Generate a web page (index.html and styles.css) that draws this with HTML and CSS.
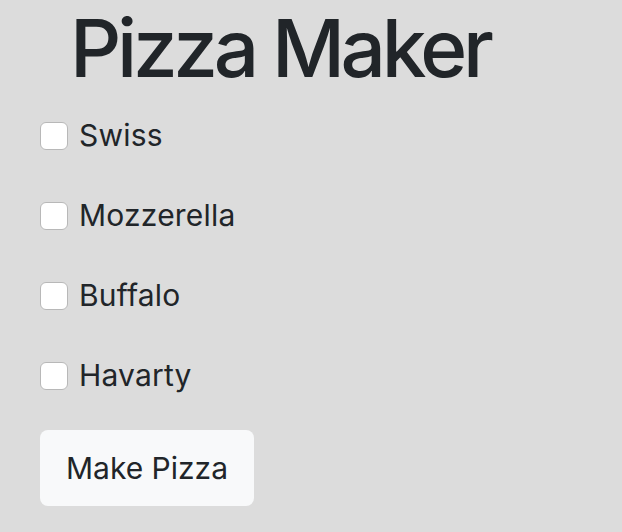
FILE: index.html
```html
<!DOCTYPE html>
<html>
<head>
<meta charset="utf-8">
<link rel="stylesheet" href="styles.css">
</head>
<body>
<div class="page">
  <h1 class="title">Pizza Maker</h1>
  <div class="options">
    <label class="option"><input type="checkbox" class="box"><span>Swiss</span></label>
    <label class="option"><input type="checkbox" class="box"><span>Mozzerella</span></label>
    <label class="option"><input type="checkbox" class="box"><span>Buffalo</span></label>
    <label class="option"><input type="checkbox" class="box"><span>Havarty</span></label>
  </div>
  <button class="make">Make Pizza</button>
</div>
</body>
</html>
```
FILE: styles.css
```css
html, body {
  margin: 0;
  padding: 0;
  background: #dcdcdc;
}
body {
  font-family: Inter, "Noto Sans", sans-serif;
  color: #212529;
}
.page {
  padding-left: 40px;
}
.title {
  margin: 0;
  padding-left: 30px;
  font-size: 80px;
  line-height: 96px;
  font-weight: 500;
  letter-spacing: -4.3px;
}
.options {
  display: flex;
  flex-direction: column;
}
.option {
  height: 80px;
  display: flex;
  align-items: center;
  gap: 11px;
  font-size: 30px;
  line-height: 1;
  letter-spacing: 0.2px;
}
.option span {
  position: relative;
  top: -1px;
}
.box {
  appearance: none;
  -webkit-appearance: none;
  margin: 0;
  width: 28px;
  height: 28px;
  background: #fff;
  border: 1px solid #b8b8b8;
  border-radius: 6px;
}
.make {
  margin-top: 14px;
  width: 214px;
  height: 76px;
  border: none;
  border-radius: 8px;
  background: #f8f9fa;
  color: #212529;
  font-family: Inter, "Noto Sans", sans-serif;
  font-size: 30px;
  padding: 0;
}
```
